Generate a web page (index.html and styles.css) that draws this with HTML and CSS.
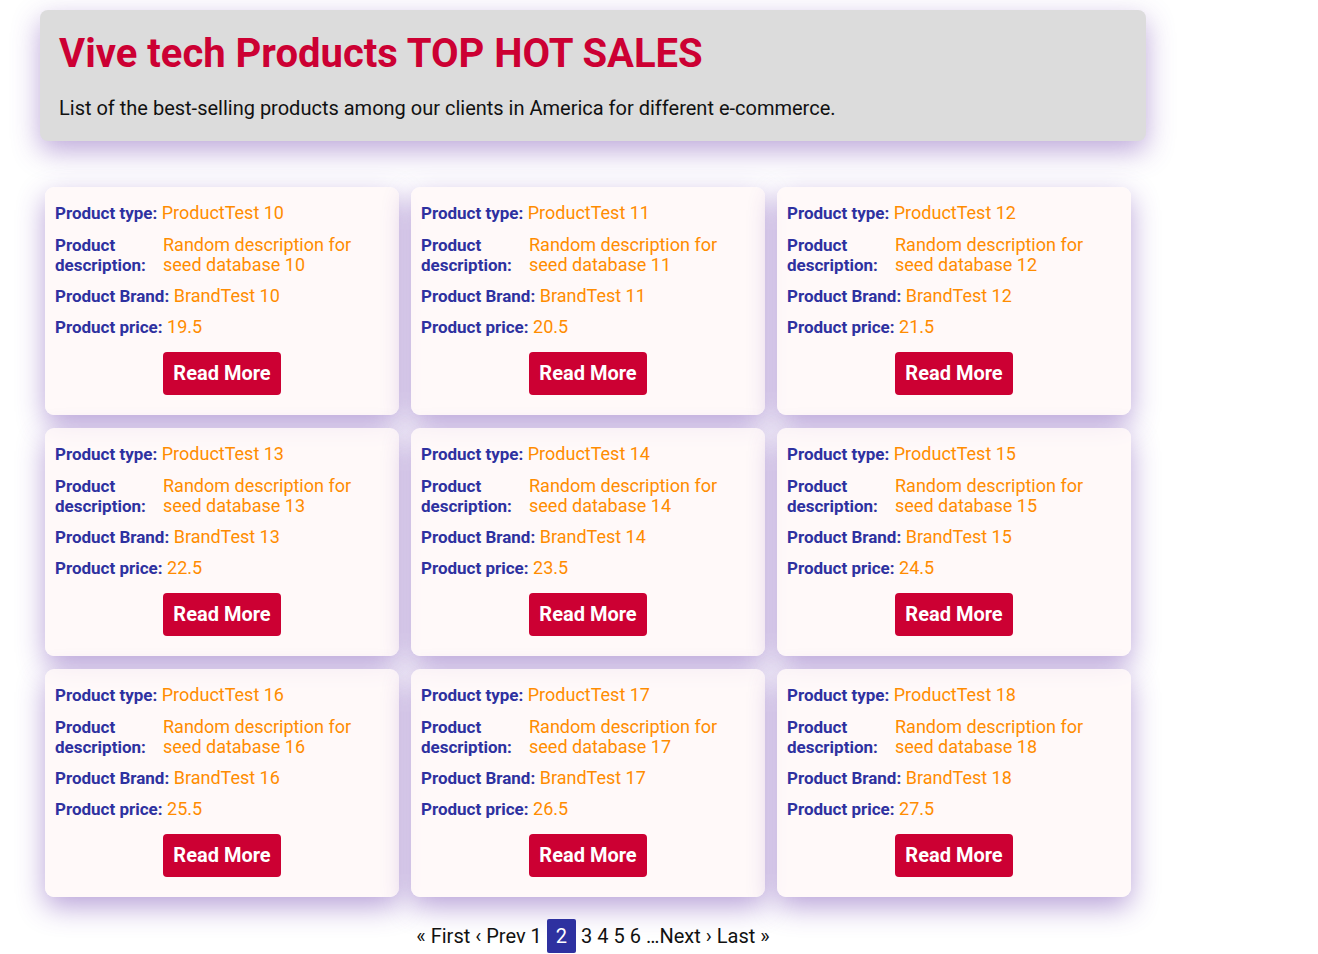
FILE: index.html
```html
<!DOCTYPE html>
<html>
<head>
<meta charset="utf-8">
<link rel="stylesheet" href="styles.css">
</head>
<body>
<div class="page">
  <header class="hero">
    <h1 class="hero-title">Vive tech Products TOP HOT SALES</h1>
    <p class="hero-sub">List of the best-selling products among our clients in America for different e-commerce.</p>
  </header>
  <div class="grid">
    <div class="card">
      <div class="row first"><span class="lbl">Product type:</span> <span class="val">ProductTest 10</span></div>
      <div class="row desc"><span class="lbl dl">Product description:</span><span class="val">Random description for seed database 10</span></div>
      <div class="row"><span class="lbl">Product Brand:</span> <span class="val">BrandTest 10</span></div>
      <div class="row"><span class="lbl">Product price:</span> <span class="val">19.5</span></div>
      <div class="btn-wrap"><a class="btn">Read More</a></div>
    </div>
    <div class="card">
      <div class="row first"><span class="lbl">Product type:</span> <span class="val">ProductTest 11</span></div>
      <div class="row desc"><span class="lbl dl">Product description:</span><span class="val">Random description for seed database 11</span></div>
      <div class="row"><span class="lbl">Product Brand:</span> <span class="val">BrandTest 11</span></div>
      <div class="row"><span class="lbl">Product price:</span> <span class="val">20.5</span></div>
      <div class="btn-wrap"><a class="btn">Read More</a></div>
    </div>
    <div class="card">
      <div class="row first"><span class="lbl">Product type:</span> <span class="val">ProductTest 12</span></div>
      <div class="row desc"><span class="lbl dl">Product description:</span><span class="val">Random description for seed database 12</span></div>
      <div class="row"><span class="lbl">Product Brand:</span> <span class="val">BrandTest 12</span></div>
      <div class="row"><span class="lbl">Product price:</span> <span class="val">21.5</span></div>
      <div class="btn-wrap"><a class="btn">Read More</a></div>
    </div>
    <div class="card">
      <div class="row first"><span class="lbl">Product type:</span> <span class="val">ProductTest 13</span></div>
      <div class="row desc"><span class="lbl dl">Product description:</span><span class="val">Random description for seed database 13</span></div>
      <div class="row"><span class="lbl">Product Brand:</span> <span class="val">BrandTest 13</span></div>
      <div class="row"><span class="lbl">Product price:</span> <span class="val">22.5</span></div>
      <div class="btn-wrap"><a class="btn">Read More</a></div>
    </div>
    <div class="card">
      <div class="row first"><span class="lbl">Product type:</span> <span class="val">ProductTest 14</span></div>
      <div class="row desc"><span class="lbl dl">Product description:</span><span class="val">Random description for seed database 14</span></div>
      <div class="row"><span class="lbl">Product Brand:</span> <span class="val">BrandTest 14</span></div>
      <div class="row"><span class="lbl">Product price:</span> <span class="val">23.5</span></div>
      <div class="btn-wrap"><a class="btn">Read More</a></div>
    </div>
    <div class="card">
      <div class="row first"><span class="lbl">Product type:</span> <span class="val">ProductTest 15</span></div>
      <div class="row desc"><span class="lbl dl">Product description:</span><span class="val">Random description for seed database 15</span></div>
      <div class="row"><span class="lbl">Product Brand:</span> <span class="val">BrandTest 15</span></div>
      <div class="row"><span class="lbl">Product price:</span> <span class="val">24.5</span></div>
      <div class="btn-wrap"><a class="btn">Read More</a></div>
    </div>
    <div class="card">
      <div class="row first"><span class="lbl">Product type:</span> <span class="val">ProductTest 16</span></div>
      <div class="row desc"><span class="lbl dl">Product description:</span><span class="val">Random description for seed database 16</span></div>
      <div class="row"><span class="lbl">Product Brand:</span> <span class="val">BrandTest 16</span></div>
      <div class="row"><span class="lbl">Product price:</span> <span class="val">25.5</span></div>
      <div class="btn-wrap"><a class="btn">Read More</a></div>
    </div>
    <div class="card">
      <div class="row first"><span class="lbl">Product type:</span> <span class="val">ProductTest 17</span></div>
      <div class="row desc"><span class="lbl dl">Product description:</span><span class="val">Random description for seed database 17</span></div>
      <div class="row"><span class="lbl">Product Brand:</span> <span class="val">BrandTest 17</span></div>
      <div class="row"><span class="lbl">Product price:</span> <span class="val">26.5</span></div>
      <div class="btn-wrap"><a class="btn">Read More</a></div>
    </div>
    <div class="card">
      <div class="row first"><span class="lbl">Product type:</span> <span class="val">ProductTest 18</span></div>
      <div class="row desc"><span class="lbl dl">Product description:</span><span class="val">Random description for seed database 18</span></div>
      <div class="row"><span class="lbl">Product Brand:</span> <span class="val">BrandTest 18</span></div>
      <div class="row"><span class="lbl">Product price:</span> <span class="val">27.5</span></div>
      <div class="btn-wrap"><a class="btn">Read More</a></div>
    </div>
  </div>
  <nav class="pager">
    <span class="pg">« First</span>
    <span class="pg">‹ Prev</span>
    <span class="pg">1</span>
    <span class="pg active">2</span>
    <span class="pg">3</span>
    <span class="pg">4</span>
    <span class="pg">5</span>
    <span class="pg">6</span>
    <span class="pg">…Next ›</span>
    <span class="pg">Last »</span>
  </nav>
</div>
</body>
</html>
```
FILE: styles.css
```css
html, body {
  margin: 0;
  padding: 0;
  background: #ffffff;
}
body {
  font-family: Roboto, "Liberation Sans", sans-serif;
  color: #111111;
}
.page {
  width: 1106px;
  margin-left: 40px;
  padding-top: 10px;
}
.hero {
  background: #dcdcdc;
  border-radius: 8px;
  padding: 21px 19px 20px 19px;
  height: 90px;
  box-shadow: 0 10px 28px rgba(100, 50, 170, 0.42);
}
.hero-title {
  margin: 0;
  font-size: 40px;
  line-height: 46px;
  font-weight: 700;
  color: #cc0033;
}
.hero-sub {
  margin: 19px 0 0 0;
  font-size: 20px;
  line-height: 24px;
  color: #111111;
}
.grid {
  margin: 46px 0 0 5px;
  display: grid;
  grid-template-columns: repeat(3, 354px);
  column-gap: 12px;
  row-gap: 13px;
}
.card {
  background: rgba(255, 248, 248, 0.82);
  border-radius: 9px;
  height: 228px;
  box-sizing: border-box;
  padding: 16px 10px 20px 10px;
  display: flex;
  flex-direction: column;
  gap: 11px;
  box-shadow: 0 10px 28px rgba(100, 50, 170, 0.45);
}
.row {
  line-height: 20px;
  font-size: 18px;
}
.row.first {
  margin-bottom: 1px;
}
.lbl {
  font-size: 17px;
  font-weight: 700;
  color: #2e31a0;
}
.val {
  color: #ff8c00;
  font-size: 18px;
}
.desc {
  display: flex;
}
.dl {
  width: 108px;
  flex: none;
}
.btn-wrap {
  display: flex;
  justify-content: center;
  margin-top: 4px;
}
.btn {
  background: #cc0033;
  color: #ffffff;
  font-weight: 700;
  font-size: 20px;
  line-height: 43px;
  height: 43px;
  padding: 0 10px;
  border-radius: 4px;
}
.pager {
  margin-top: 22px;
  display: flex;
  justify-content: center;
  align-items: center;
  font-size: 20px;
  line-height: 34px;
  gap: 5px;
  color: #111111;
}
.pg.active {
  background: #2e31a0;
  color: #ffffff;
  padding: 0 9px;
  border-radius: 2px;
}
```
